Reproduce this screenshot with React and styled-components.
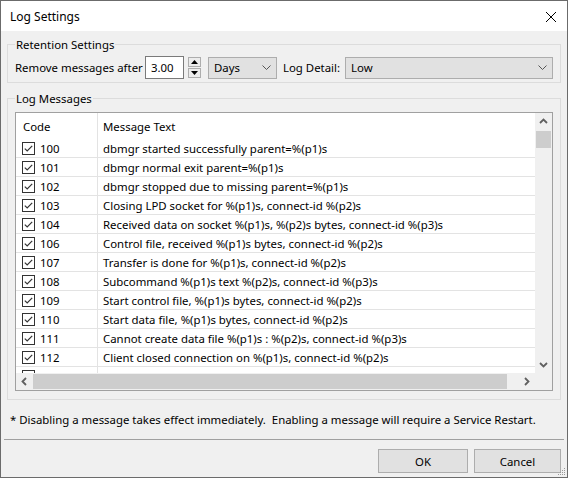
import React from "react"
import styled, { createGlobalStyle } from "styled-components"

const messages = [
  ["100", "dbmgr started successfully parent=%(p1)s"],
  ["101", "dbmgr normal exit parent=%(p1)s"],
  ["102", "dbmgr stopped due to missing parent=%(p1)s"],
  ["103", "Closing LPD socket for %(p1)s, connect-id %(p2)s"],
  ["104", "Received data on socket %(p1)s, %(p2)s bytes, connect-id %(p3)s"],
  ["106", "Control file, received %(p1)s bytes, connect-id %(p2)s"],
  ["107", "Transfer is done for %(p1)s, connect-id %(p2)s"],
  ["108", "Subcommand %(p1)s text %(p2)s, connect-id %(p3)s"],
  ["109", "Start control file, %(p1)s bytes, connect-id %(p2)s"],
  ["110", "Start data file, %(p1)s bytes, connect-id %(p2)s"],
  ["111", "Cannot create data file %(p1)s : %(p2)s, connect-id %(p3)s"],
  ["112", "Client closed connection on %(p1)s, connect-id %(p2)s"],
  ["113", "Acknowledge for %(p1)s, connect-id %(p2)s"],
]

const GlobalStyle = createGlobalStyle`
  html, body {
    margin: 0;
    padding: 0;
    background: #f0f0f0;
  }
  body {
    font-family: "Segoe UI", "Noto Sans", sans-serif;
    font-size: 11.4px;
    color: #000;
  }
  * {
    box-sizing: border-box;
  }
`

const Check = () => (
  <CheckBox>
    <svg width="13" height="13" viewBox="0 0 13 13">
      <rect x="0.5" y="0.5" width="12" height="12" fill="#fff" stroke="#333" />
      <path d="M2.8 6.6 L5.2 9 L10.2 3.8" fill="none" stroke="#333" strokeWidth="1.2" />
    </svg>
  </CheckBox>
)

const Chevron = ({ dir }) => {
  const d = {
    up: "M1 6 L4.5 2.5 L8 6",
    down: "M1 3 L4.5 6.5 L8 3",
    left: "M6 1 L2.5 4.5 L6 8",
    right: "M3 1 L6.5 4.5 L3 8",
  }[dir]
  return (
    <svg width="9" height="9" viewBox="0 0 9 9">
      <path d={d} fill="none" stroke="#606060" strokeWidth="1.8" />
    </svg>
  )
}

const ComboArrow = () => (
  <svg width="9" height="5" viewBox="0 0 9 5">
    <path d="M0.5 0.5 L4.5 4.5 L8.5 0.5" fill="none" stroke="#555" strokeWidth="1" />
  </svg>
)

const App = () => {
  return (
    <Window>
      <GlobalStyle />
      <TitleBar>
        <Title>Log Settings</Title>
        <CloseButton>
          <svg width="10" height="10" viewBox="0 0 10 10">
            <path d="M0 0 L10 10 M10 0 L0 10" stroke="#000" strokeWidth="1" />
          </svg>
        </CloseButton>
      </TitleBar>

      <Body>
        <Group $top="4px" $bottom="3px">
          <Legend>Retention Settings</Legend>
          <ControlRow>
            <Label $width="130px">Remove messages after</Label>
            <NumberInput>3.00</NumberInput>
            <Spinner>
              <SpinButton>
                <svg width="7" height="4" viewBox="0 0 7 4"><path d="M0 4 L3.5 0 L7 4 Z" fill="#000" /></svg>
              </SpinButton>
              <SpinButton>
                <svg width="7" height="4" viewBox="0 0 7 4"><path d="M0 0 L3.5 4 L7 0 Z" fill="#000" /></svg>
              </SpinButton>
            </Spinner>
            <Combo $width="69px">
              <span>Days</span>
              <ComboArrow />
            </Combo>
            <Label $width="62px" $left="6px">Log Detail:</Label>
            <Combo $grow>
              <span>Low</span>
              <ComboArrow />
            </Combo>
          </ControlRow>
        </Group>

        <Group $gap="8px" $top="6px" $bottom="8px">
          <Legend>Log Messages</Legend>
          <ListBox>
            <Viewport>
              <HeaderRow>
                <CodeCell $header>Code</CodeCell>
                <TextCell>Message Text</TextCell>
              </HeaderRow>
              {messages.map(([code, text]) => (
                <Row key={code}>
                  <CodeCell>
                    <Check />
                    {code}
                  </CodeCell>
                  <TextCell>{text}</TextCell>
                </Row>
              ))}
            </Viewport>
            <VScroll>
              <ArrowBox><Chevron dir="up" /></ArrowBox>
              <VThumb />
              <Track />
              <ArrowBox><Chevron dir="down" /></ArrowBox>
            </VScroll>
            <HScroll>
              <ArrowBox><Chevron dir="left" /></ArrowBox>
              <HThumb />
              <Track />
              <ArrowBox><Chevron dir="right" /></ArrowBox>
            </HScroll>
            <Corner />
          </ListBox>
        </Group>

        <Note>* Disabling a message takes effect immediately.  Enabling a message will require a Service Restart.</Note>
      </Body>

      <Separator />
      <Footer>
        <Button $width="90px">OK</Button>
        <Button $width="87px">Cancel</Button>
      </Footer>
      <Grip>
        <svg width="8" height="8" viewBox="0 0 8 8">
          <rect x="6" y="0" width="1" height="1" fill="#999" />
          <rect x="4" y="2" width="1" height="1" fill="#999" />
          <rect x="6" y="2" width="1" height="1" fill="#999" />
          <rect x="2" y="4" width="1" height="1" fill="#999" />
          <rect x="4" y="4" width="1" height="1" fill="#999" />
          <rect x="6" y="4" width="1" height="1" fill="#999" />
          <rect x="0" y="6" width="1" height="1" fill="#999" />
          <rect x="2" y="6" width="1" height="1" fill="#999" />
          <rect x="4" y="6" width="1" height="1" fill="#999" />
          <rect x="6" y="6" width="1" height="1" fill="#999" />
        </svg>
      </Grip>
    </Window>
  )
}

const Window = styled.div`
  position: relative;
  width: 568px;
  height: 478px;
  border: 1px solid #6b6b6b;
  background: #f0f0f0;
  display: flex;
  flex-direction: column;
  overflow: hidden;
`
const TitleBar = styled.div`
  height: 30px;
  flex: none;
  background: #fff;
  display: flex;
  align-items: center;
  justify-content: space-between;
  padding-left: 9px;
  font-size: 12px;
`
const Title = styled.div`
  line-height: 16px;
  padding-top: 1px;
`
const CloseButton = styled.div`
  width: 32px;
  height: 30px;
  display: flex;
  align-items: center;
  justify-content: center;
  padding-top: 1px;
`
const Body = styled.div`
  padding: 6px 6px 0 6px;
  display: flex;
  flex-direction: column;
`
const Group = styled.fieldset`
  margin: ${(p) => p.$gap || "0"} 0 0 0;
  border: 1px solid #dcdcdc;
  padding: ${(p) => p.$top} 7px ${(p) => p.$bottom} 7px;
  min-width: 0;
`
const Legend = styled.legend`
  padding: 0 1px;
  line-height: 15px;
`
const ControlRow = styled.div`
  display: flex;
  align-items: center;
  height: 23px;
`
const Label = styled.span`
  width: ${(p) => p.$width};
  flex: none;
  margin-left: ${(p) => p.$left || "0"};
  white-space: nowrap;
`
const NumberInput = styled.div`
  width: 39px;
  height: 23px;
  border: 1px solid #7a7a7a;
  background: #fff;
  padding-left: 5px;
  line-height: 21px;
`
const Spinner = styled.div`
  display: flex;
  flex-direction: column;
  gap: 1px;
  margin-left: 4px;
  margin-right: 7px;
`
const SpinButton = styled.div`
  width: 13px;
  height: 10px;
  border: 1px solid #adadad;
  background: #ececec;
  display: flex;
  align-items: center;
  justify-content: center;
`
const Combo = styled.div`
  width: ${(p) => p.$width || "auto"};
  flex: ${(p) => (p.$grow ? "1" : "none")};
  height: 22px;
  border: 1px solid #adadad;
  background: #e1e1e1;
  display: flex;
  align-items: center;
  justify-content: space-between;
  padding: 0 5px 0 5px;
`
const ListBox = styled.div`
  height: 279px;
  border: 1px solid #a0a0a0;
  background: #fff;
  display: grid;
  grid-template-columns: 1fr 17px;
  grid-template-rows: 1fr 17px;
  overflow: hidden;
`
const Viewport = styled.div`
  overflow: hidden;
  min-width: 0;
  min-height: 0;
`
const HeaderRow = styled.div`
  display: flex;
  height: 26px;
  align-items: stretch;
`
const Row = styled.div`
  display: flex;
  height: 19px;
  border-bottom: 1px solid #e3e3e3;
`
const CodeCell = styled.div`
  width: 82px;
  flex: none;
  border-right: 1px solid #e3e3e3;
  display: flex;
  align-items: center;
  gap: 5px;
  padding-left: ${(p) => (p.$header ? "7px" : "6px")};
  white-space: nowrap;
`
const CheckBox = styled.span`
  display: flex;
  width: 13px;
  height: 13px;
`
const TextCell = styled.div`
  padding-left: 5px;
  display: flex;
  align-items: center;
  white-space: nowrap;
`
const VScroll = styled.div`
  background: #f0f0f0;
  display: flex;
  flex-direction: column;
`
const HScroll = styled.div`
  background: #f0f0f0;
  display: flex;
`
const ArrowBox = styled.div`
  width: 17px;
  height: 17px;
  flex: none;
  display: flex;
  align-items: center;
  justify-content: center;
`
const VThumb = styled.div`
  height: 17px;
  margin: 1px 1px 0 1px;
  background: #cdcdcd;
  flex: none;
`
const HThumb = styled.div`
  width: 474px;
  margin: 1px 0;
  background: #cdcdcd;
  flex: none;
`
const Track = styled.div`
  flex: 1;
`
const Corner = styled.div`
  background: #f0f0f0;
`
const Note = styled.div`
  margin-top: 12px;
  padding-left: 3px;
  line-height: 15px;
  white-space: pre;
`
const Separator = styled.div`
  height: 1px;
  background: #a0a0a0;
  margin: 12px 3px 0 3px;
  flex: none;
`
const Footer = styled.div`
  display: flex;
  justify-content: flex-end;
  gap: 6px;
  padding: 9px 6px 0 0;
`
const Button = styled.div`
  width: ${(p) => p.$width};
  height: 24px;
  border: 1px solid #adadad;
  background: #e1e1e1;
  display: flex;
  align-items: center;
  justify-content: center;
`
const Grip = styled.div`
  position: absolute;
  right: 1px;
  bottom: 1px;
  display: flex;
`

export default App
